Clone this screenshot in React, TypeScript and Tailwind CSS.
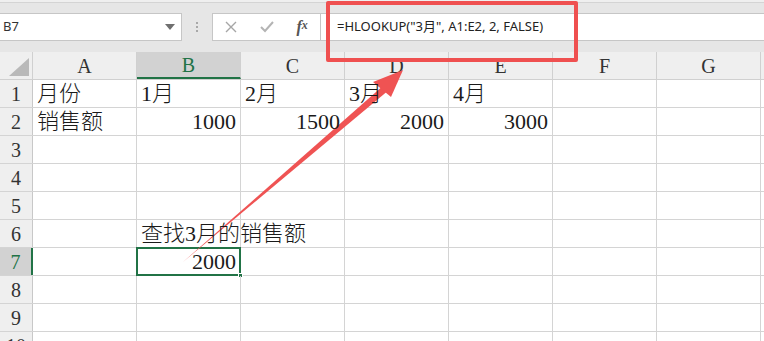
import React from "react";

const COLS = ["A", "B", "C", "D", "E", "F", "G", ""];

type Cell = { t: string; right?: boolean };
const DATA: Record<number, Record<string, Cell>> = {
  1: { A: { t: "月份" }, B: { t: "1月" }, C: { t: "2月" }, D: { t: "3月" }, E: { t: "4月" } },
  2: {
    A: { t: "销售额" },
    B: { t: "1000", right: true },
    C: { t: "1500", right: true },
    D: { t: "2000", right: true },
    E: { t: "3000", right: true },
  },
  6: { B: { t: "查找3月的销售额" } },
  7: { B: { t: "2000", right: true } },
};

const cellFont = { fontFamily: '"Liberation Serif", "Noto Sans CJK SC", serif' };

export default function App() {
  return (
    <div className="relative w-[764px] h-[341px] overflow-hidden bg-white">
      {/* Toolbar */}
      <div className="h-[52px] bg-[#e6e6e6] flex flex-col">
        <div className="h-[3px] bg-[#efefef] border-b border-[#d4d4d4]" />
        <div className="flex mt-[10px] h-[28px]">
          <div
            className="w-[182px] h-[28px] bg-white border-y border-r border-[#c6c6c6] flex items-center justify-between pl-[3px] pr-[6px] text-[13px] text-[#333]"
            style={{ fontFamily: '"Noto Sans", sans-serif' }}
          >
            <span>B7</span>
            <svg width="10" height="6" viewBox="0 0 10 6">
              <path d="M0 0 L10 0 L5 6 Z" fill="#6f6f6f" />
            </svg>
          </div>
          <div className="w-[30px] flex flex-col items-center justify-center gap-[2px]">
            <div className="w-[2px] h-[2px] bg-[#a8a8a8]" />
            <div className="w-[2px] h-[2px] bg-[#a8a8a8]" />
            <div className="w-[2px] h-[2px] bg-[#a8a8a8]" />
          </div>
          <div className="w-[109px] h-[28px] bg-white border border-[#c6c6c6] flex items-center">
            <div className="w-[36px] flex justify-center">
              <svg width="12" height="12" viewBox="0 0 12 12">
                <path d="M1 1 L11 11 M11 1 L1 11" stroke="#a6a6a6" strokeWidth="1.4" />
              </svg>
            </div>
            <div className="w-[36px] flex justify-center">
              <svg width="14" height="12" viewBox="0 0 14 12">
                <path d="M1 6 L5 10 L13 1" stroke="#b4b4b4" strokeWidth="2" fill="none" />
              </svg>
            </div>
            <div
              className="w-[36px] flex justify-center text-[16px] italic font-bold text-[#555]"
              style={{ fontFamily: '"Liberation Serif", serif' }}
            >
              f<span className="text-[12px] relative top-[1px]">x</span>
            </div>
          </div>
          <div
            className="flex-1 h-[28px] bg-white border-y border-[#c6c6c6] flex items-center pl-[16px] text-[13px] text-[#222]"
            style={{ fontFamily: '"Noto Sans", "Noto Sans CJK SC", sans-serif' }}
          >
            =HLOOKUP("3月", A1:E2, 2, FALSE)
          </div>
        </div>
      </div>

      {/* Column header row */}
      <div className="flex h-[28px] bg-[#efefef] border-b border-[#d0d0d0]" style={cellFont}>
        <div className="relative w-[33px] shrink-0 border-r border-[#d0d0d0]">
          <svg className="absolute left-0 top-0" width="33" height="27" viewBox="0 0 33 27">
            <path d="M29 6 L29 24 L9 24 Z" fill="#b9b9b9" />
          </svg>
        </div>
        {COLS.map((c, i) => (
          <div
            key={i}
            className={
              c === "B"
                ? "w-[104px] shrink-0 border-r border-[#d0d0d0] bg-[#d2d2d2] border-b-2 border-b-[#217346] flex items-center justify-center text-[20px] text-[#217346]"
                : "w-[104px] shrink-0 border-r border-[#d0d0d0] flex items-center justify-center text-[20px] text-[#333]"
            }
          >
            {c}
          </div>
        ))}
      </div>

      {/* Rows */}
      {[1, 2, 3, 4, 5, 6, 7, 8, 9, 10].map((r) => (
        <div key={r} className="flex h-[28px] border-b border-[#d4d4d4]" style={cellFont}>
          <div
            className={
              r === 7
                ? "w-[33px] shrink-0 bg-[#d2d2d2] border-r-2 border-r-[#217346] flex items-center justify-center text-[20px] text-[#217346]"
                : "w-[33px] shrink-0 bg-[#efefef] border-r border-[#c8c8c8] flex items-center justify-center text-[20px] text-[#333]"
            }
          >
            {r}
          </div>
          {COLS.map((c, i) => {
            const cell = c ? DATA[r]?.[c] : undefined;
            const selected = r === 7 && c === "B";
            return (
              <div
                key={i}
                className={
                  cell?.right
                    ? "relative w-[104px] shrink-0 border-r border-[#d4d4d4] flex items-end justify-end pr-[4px] text-[22px] leading-[26px] text-[#1a1a1a]"
                    : "relative w-[104px] shrink-0 border-r border-[#d4d4d4] flex items-end pl-[4px] text-[22px] leading-[26px] text-[#1a1a1a] font-light whitespace-nowrap"
                }
              >
                {cell && <span className="relative z-10">{cell.t}</span>}
                {selected && (
                  <>
                    <div className="absolute -left-[1px] -top-[1px] -right-[1px] -bottom-[1px] border-2 border-[#217346]" />
                    <div className="absolute -right-[3px] -bottom-[3px] w-[5px] h-[5px] bg-[#217346] border border-white" />
                  </>
                )}
              </div>
            );
          })}
        </div>
      ))}

      {/* Red highlight box */}
      <div className="absolute left-[326px] top-[1px] w-[252px] h-[61px] border-[4px] border-[#ef5050] rounded-[2px]" />

      {/* Arrow */}
      <svg className="absolute left-0 top-0 pointer-events-none" width="764" height="341" viewBox="0 0 764 341">
        <path d="M183 262 L384.5 84.5 L389.5 89.5 Z" fill="#ef5353" />
        <path d="M403 70 L373 82 L391 97 Z" fill="#ef5353" />
      </svg>
    </div>
  );
}
